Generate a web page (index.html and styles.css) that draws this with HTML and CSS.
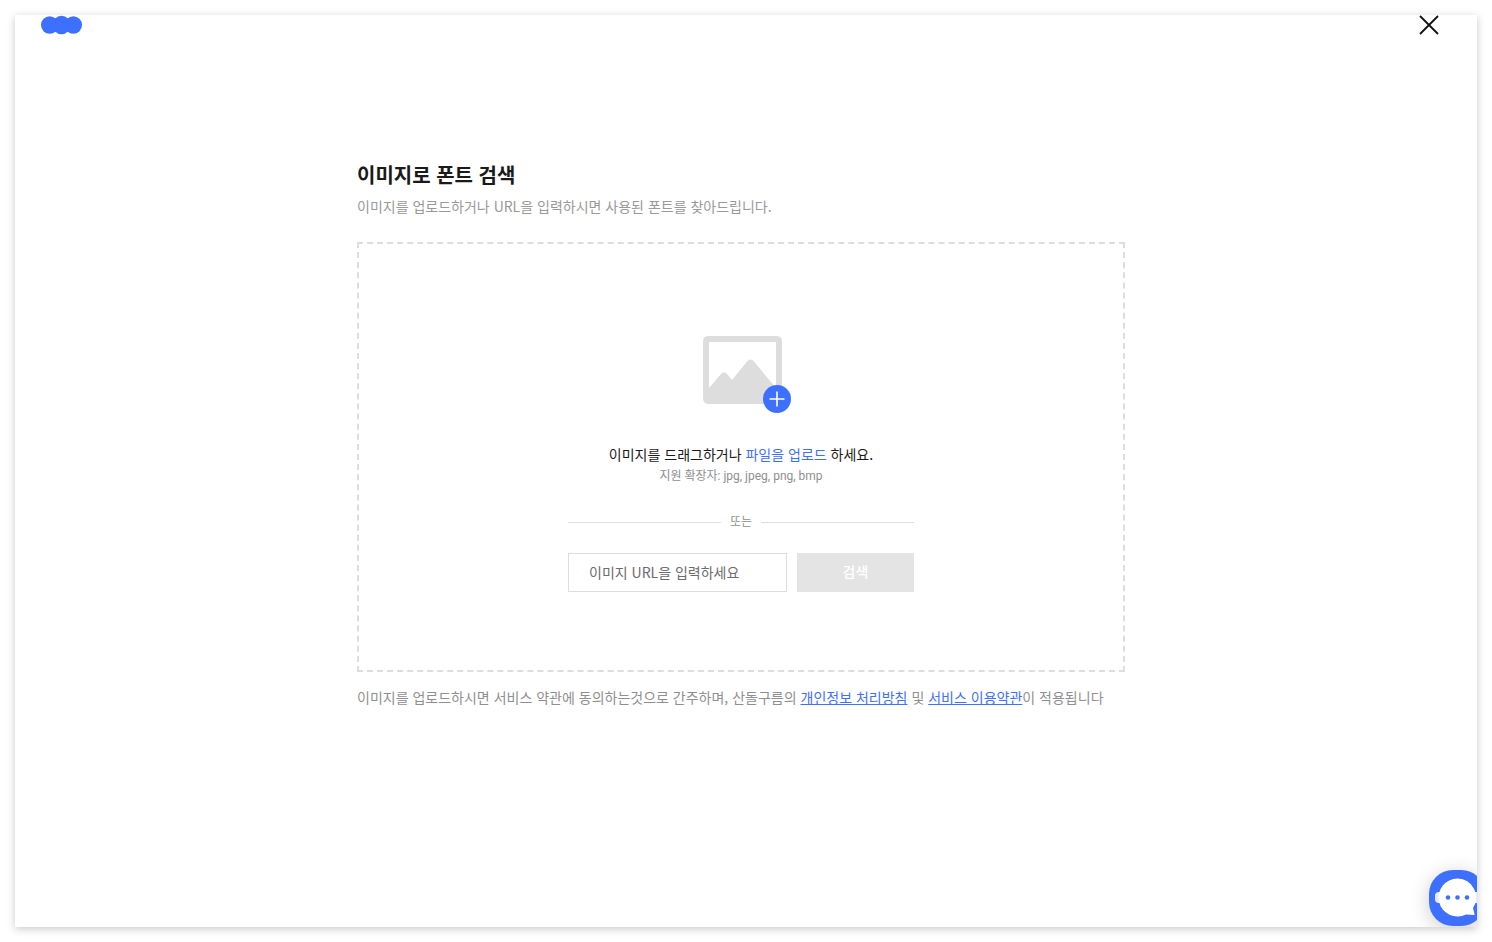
FILE: index.html
```
<!DOCTYPE html>
<html lang="ko">
<head>
  <meta charset="UTF-8">
  <meta name="viewport" content="width=device-width, initial-scale=1.0">
  <title>이미지로 폰트 검색</title>
  <link rel="stylesheet" href="styles.css">
</head>
<body>

  <div class="panel">
    <header class="header">
      <a class="logo" href="#" aria-label="산돌구름">
        <svg width="42" height="20" viewBox="0 0 42 20" fill="#3e70ff">
          <circle cx="8.7" cy="10" r="8.7"/>
          <circle cx="20.5" cy="10" r="9.2"/>
          <circle cx="32.3" cy="10" r="8.7"/>
        </svg>
      </a>
      <button class="close" type="button" aria-label="닫기">
        <svg width="20" height="20" viewBox="0 0 20 20" fill="none" stroke="#111" stroke-width="1.8">
          <path d="M1 1L19 19M19 1L1 19"/>
        </svg>
      </button>
    </header>

    <main class="content">
      <h1 class="title">이미지로 폰트 검색</h1>
      <p class="desc">이미지를 업로드하거나 URL을 입력하시면 사용된 폰트를 찾아드립니다.</p>

      <section class="dropzone">
        <svg class="upload-icon" width="90" height="78" viewBox="0 0 90 78">
          <path fill="#ddd" fill-rule="evenodd" d="M6 0H75Q80 0 80 6V62Q80 68 74 68H7Q1 68 1 62V6Q1 0 6 0ZM7 6V52L19 38Q22 34.500 25 38L30 44L45 25.500Q48.500 21.500 52 25.500L74 52V6Z"/>
          <circle cx="75" cy="63" r="14" fill="#3e70ff"/>
          <path d="M75 55.500V70.500M67.500 63H82.500" stroke="#fff" stroke-width="1.600"/>
        </svg>

        <p class="drop-text">이미지를 드래그하거나 <label class="upload-label" for="file">파일을 업로드</label> 하세요.</p>
        <input class="file" type="file" id="file" accept=".jpg,.jpeg,.png,.bmp">
        <p class="ext">지원 확장자: jpg, jpeg, png, bmp</p>

        <div class="divider">또는</div>

        <form class="url-form">
          <input class="url-input" type="text" placeholder="이미지 URL을 입력하세요" aria-label="이미지 URL">
          <button class="url-submit" type="submit" disabled>검색</button>
        </form>
      </section>

      <p class="terms">이미지를 업로드하시면 서비스 약관에 동의하는것으로 간주하며, 산돌구름의 <a href="#">개인정보 처리방침</a> 및 <a href="#">서비스 이용약관</a>이 적용됩니다</p>
    </main>

    <button class="chat" type="button" aria-label="채팅 상담">
      <svg width="56" height="56" viewBox="0 0 56 56">
        <rect x="6" y="22" width="10" height="11" rx="4" fill="#e4ebff"/>
        <rect x="41" y="22" width="10" height="11" rx="4" fill="#e4ebff"/>
        <path fill="#fff" d="M28.500 8.500A19 19 0 1 0 37 44.500L45 45Q46 45 45.500 44L44 38A19 19 0 0 0 28.500 8.500Z"/>
        <g fill="#3e70ff">
          <circle cx="19" cy="27.500" r="2.300"/>
          <circle cx="28.500" cy="27.500" r="2.300"/>
          <circle cx="38" cy="27.500" r="2.300"/>
        </g>
      </svg>
    </button>
  </div>

</body>
</html>
```
FILE: styles.css
```
* {
  box-sizing: border-box;
}

body {
  margin: 0;
  padding: 15px;
  background-color: #fff;
  color: #1a1a1a;
  font-family: "Noto Sans CJK KR", sans-serif;
  font-size: 14px;
  line-height: 20px;
}

h1,
p {
  margin: 0;
}

button {
  padding: 0;
  border: 0;
  background: none;
  font-family: inherit;
  cursor: pointer;
}

svg {
  display: block;
}

.panel {
  position: relative;
  min-height: calc(100vh - 30px);
  padding-right: 10px;
  background-color: #fff;
  box-shadow: 0 2px 8px rgba(0, 0, 0, 0.22);
  overflow: hidden;
}

.header {
  display: flex;
  justify-content: space-between;
  padding: 0 28px 0 26px;
}

.content {
  max-width: 768px;
  margin: 0 auto;
  padding: 125px 0 40px;
}

.title {
  font-size: 20px;
  font-weight: 700;
  line-height: 30px;
}

.desc {
  margin: 6px 0 26px;
  color: #999;
}

.dropzone {
  display: flex;
  flex-direction: column;
  align-items: center;
  padding: 92px 20px 78px;
  border: 2px dashed #ddd;
}

.upload-icon {
  margin-left: 12px;
}

.drop-text {
  margin-top: 30px;
}

.upload-label {
  color: #3e70ff;
  cursor: pointer;
}

.file {
  display: none;
}

.ext {
  margin-top: 2px;
  color: #8f8f8f;
  font-family: Roboto, "Noto Sans CJK KR", sans-serif;
  font-size: 12px;
}

.divider {
  display: flex;
  align-items: center;
  gap: 9px;
  width: 100%;
  max-width: 346px;
  margin: 25px 0 22px;
  color: #8f8f8f;
  font-size: 12px;
}

.divider::before,
.divider::after {
  content: "";
  flex: 1;
  height: 1px;
  margin-top: 2px;
  background-color: #ddd;
}

.url-form {
  display: flex;
  gap: 10px;
  width: 100%;
  max-width: 346px;
}

.url-input {
  flex: 1;
  min-width: 0;
  height: 39px;
  padding: 0 20px 2px;
  border: 1px solid #ddd;
  font-family: inherit;
  font-size: 14px;
}

.url-input::placeholder {
  color: #6c6c6c;
}

.url-submit {
  width: 117px;
  padding-bottom: 4px;
  background-color: #e4e4e4;
  color: #fff;
  font-size: 14px;
  font-weight: 500;
}

.terms {
  margin-top: 15px;
  color: #8f8f8f;
}

.terms a {
  color: #3e70ff;
}

.chat {
  position: absolute;
  right: -8px;
  bottom: 1px;
  border-radius: 24px;
  background-color: #3e70ff;
  box-shadow: 0 4px 20px rgba(0, 0, 0, 0.2);
}
```
